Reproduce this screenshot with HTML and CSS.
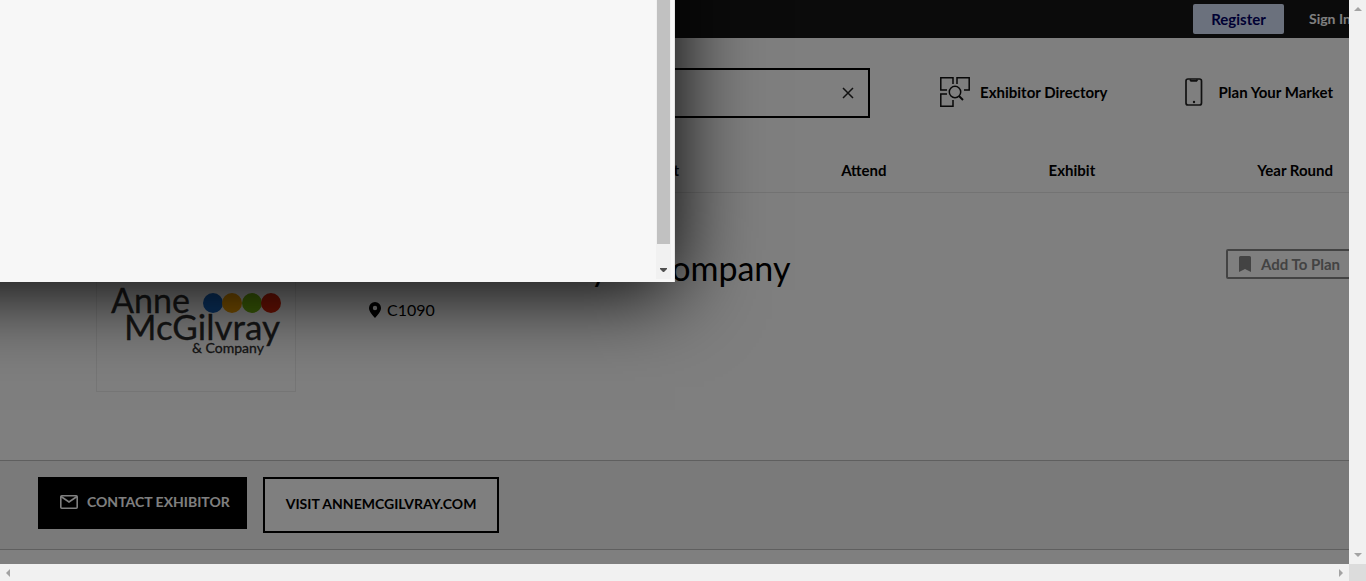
FILE: index.html
```html
<!DOCTYPE html>
<html lang="en">
<head>
<meta charset="utf-8">
<title>Anne McGilvray &amp; Company</title>
<link rel="stylesheet" href="styles.css">
</head>
<body>
<div class="window">
  <div class="page">
    <div class="topbar">
      <button class="register" type="button">Register</button>
      <a class="signin" href="#">Sign In</a>
    </div>
    <header class="header">
      <div class="tools">
        <form class="search">
          <input class="search-input" type="text" aria-label="Search">
          <button class="clear" type="reset" aria-label="Clear search">
            <svg width="12" height="12" viewBox="0 0 12 12"><path d="M1 1l10 10M11 1L1 11" fill="none" stroke="#222" stroke-width="1.5"/></svg>
          </button>
        </form>
        <a class="tool" href="#">
          <svg width="30" height="30" viewBox="0 0 30 30" fill="none" stroke="#111" stroke-width="1.5"><path d="M7 13H.8V.8H13V7M17 7V.8H29.200V13H24M7 17H.8V29.200H13V23"/><circle cx="15" cy="15" r="5.700"/><path d="M19 19l4 4" stroke-width="2"/></svg>
          <span>Exhibitor Directory</span>
        </a>
        <a class="tool plan" href="#">
          <svg width="18" height="28" viewBox="0 0 18 28" fill="none" stroke="#222" stroke-width="1.700"><rect x="1" y="1" width="15.500" height="26" rx="2"/><path d="M5 1.500l1 1.300h5.500l1-1.300"/><circle cx="9" cy="24" r="1.200" fill="#222" stroke="none"/></svg>
          <span>Plan Your Market</span>
        </a>
      </div>
      <nav class="nav">
        <a href="#">Market</a>
        <a href="#">Attend</a>
        <a href="#">Exhibit</a>
        <a href="#">Year Round</a>
      </nav>
    </header>
    <main>
      <section class="profile">
        <div class="logo">
          <svg width="198" height="197" viewBox="0 0 198 197" role="img" aria-label="Anne McGilvray &amp; Company">
            <g class="logo-text">
              <text x="14" y="119" font-size="34">Anne</text>
              <text x="27" y="146" font-size="35">McGilvray</text>
              <text x="95" y="159" font-size="14">&amp; Company</text>
            </g>
            <circle cx="116" cy="109" r="10" fill="#1565c0"/>
            <circle cx="135" cy="109" r="10" fill="#f5a000"/>
            <circle cx="155" cy="109" r="10" fill="#76b80c"/>
            <circle cx="174" cy="109" r="10" fill="#dc2408"/>
          </svg>
        </div>
        <div class="details">
          <h1 class="title">Anne McGilvray &amp; Company</h1>
          <p class="place">
            <svg width="12" height="16" viewBox="0 0 12 16"><path fill-rule="evenodd" d="M6 0a6 6 0 0 1 6 6c0 3.500-3 6.500-6 10C3 12.500 0 9.500 0 6a6 6 0 0 1 6-6zm0 3.800a2.200 2.200 0 1 0 0 4.400 2.200 2.200 0 0 0 0-4.400z"/></svg>
            <span>C1090</span>
          </p>
        </div>
        <button class="add" type="button">
          <svg width="12" height="16" viewBox="0 0 12 16"><path d="M1.500 0h9Q12 0 12 1.500V16l-6-3-6 3V1.500Q0 0 1.500 0z" fill="#868686"/></svg>
          <span>Add To Plan</span>
        </button>
      </section>
      <section class="actions">
        <button class="contact" type="button">
          <svg width="18" height="14" viewBox="0 0 18 14" fill="none" stroke="#fff" stroke-width="1.600"><rect x=".8" y=".8" width="16.400" height="12.400" rx="1"/><path d="M1 1.500l8 5.500 8-5.500"/></svg>
          <span>CONTACT EXHIBITOR</span>
        </button>
        <a class="visit" href="#">VISIT ANNEMCGILVRAY.COM</a>
      </section>
    </main>
    <div class="overlay"></div>
    <div class="modal" role="dialog" aria-label="Dialog">
      <div class="modal-track">
        <div class="modal-thumb"></div>
        <svg class="modal-arrow" width="7" height="4" viewBox="0 0 7 4"><path d="M0 0h7v1L4 4H3L0 1z" fill="#505050"/></svg>
      </div>
    </div>
  </div>
  <div class="vbar">
    <svg width="8" height="4" viewBox="0 0 8 4"><path d="M0 4L4 0l4 4z"/></svg>
    <svg width="8" height="4" viewBox="0 0 8 4"><path d="M0 0l4 4 4-4z"/></svg>
  </div>
  <div class="hbar">
    <svg width="4" height="8" viewBox="0 0 4 8"><path d="M4 0L0 4l4 4z"/></svg>
    <svg width="4" height="8" viewBox="0 0 4 8"><path d="M0 0l4 4-4 4z"/></svg>
  </div>
  <div class="corner"></div>
</div>
</body>
</html>
```
FILE: styles.css
```css
* { box-sizing: border-box; }
body {
  margin: 0;
  font-family: Lato, "Open Sans", sans-serif;
  font-size: 15px;
  line-height: 20px;
  color: #000;
}
a { color: inherit; text-decoration: none; }
button { font: inherit; color: inherit; padding: 0; margin: 0; white-space: nowrap; }
svg { display: block; flex: none; }

.window {
  display: grid;
  grid-template: minmax(0, 1fr) 17px / minmax(0, 1fr) 17px;
  height: 100vh;
}
.page { position: relative; overflow: hidden; background: #fff; }

.topbar {
  display: flex;
  justify-content: flex-end;
  align-items: center;
  gap: 25px;
  height: 38px;
  padding-bottom: 1px;
  background: #161616;
  color: #fff;
  font-size: 14px;
  font-weight: 700;
}
.register {
  width: 91px;
  height: 30px;
  border: 0;
  border-radius: 2px;
  background: #d6e2fa;
  color: #000066;
  font-size: 15px;
}
.signin { width: 40px; white-space: nowrap; }

.header { padding: 30px 16px 0 16px; border-bottom: 1px solid #e6e6e6; }
.tools { display: flex; align-items: center; }
.search {
  display: flex;
  flex: 1;
  align-items: center;
  height: 50px;
  margin-right: 70px;
  padding-right: 14px;
  border: 2px solid #000;
}
.search-input { flex: 1; min-width: 0; border: 0; background: none; font: inherit; outline: 0; }
.clear { border: 0; background: none; }
.tool { display: flex; align-items: center; gap: 10px; padding-bottom: 2px; font-weight: 700; white-space: nowrap; }
.plan { gap: 16px; margin-left: 77px; }
.nav {
  display: flex;
  justify-content: flex-end;
  gap: 162px;
  padding: 42px 0 12px;
  font-weight: 700;
  white-space: nowrap;
}

.profile {
  display: flex;
  align-items: flex-start;
  height: 267px;
  padding-left: 96px;
}
.logo { border: 1px solid #ececec; }
.logo-text { font-family: Lato, sans-serif; fill: #2c2c2c; stroke: #2c2c2c; stroke-width: .3px; }
.details { flex: 1; padding: 53px 0 0 73px; }
.title { margin: 0; font-size: 34px; line-height: 44px; font-weight: 400; white-space: nowrap; }
.place { display: flex; align-items: center; gap: 6px; margin: 10px 0 0; font-size: 16px; }
.add {
  display: flex;
  align-items: center;
  gap: 10px;
  width: 132px;
  height: 30px;
  margin: 56px -9px 0 0;
  padding: 0 0 1px 11px;
  border: 2px solid #868686;
  border-radius: 2px;
  background: none;
  color: #868686;
  font-weight: 700;
}

.actions {
  display: flex;
  align-items: flex-start;
  gap: 16px;
  padding: 16px 38px;
  border: solid #bebebe;
  border-width: 1px 0;
  background: #f5f5f5;
  font-size: 14px;
  font-weight: 700;
}
.contact {
  display: flex;
  align-items: center;
  gap: 9px;
  height: 52px;
  padding: 0 17px 2px 22px;
  border: 0;
  background: #000;
  color: #fff;
}
.visit { padding: 15px 21px 17px; border: 2px solid #000; background: #fff; }

.overlay { position: absolute; inset: 0; background: rgba(0, 0, 0, .5); }
.modal {
  position: absolute;
  left: -100px;
  top: -300px;
  width: 775px;
  height: 582px;
  padding: 0 3px 3px 0;
  border-right: 1px solid #e4e4e4;
  background: #f7f7f7;
  box-shadow: 0 8px 80px #000;
}
.modal-track {
  display: flex;
  flex-direction: column;
  align-items: center;
  height: 100%;
  width: 15px;
  margin-left: auto;
  background: #f1f1f1;
}
.modal-thumb { width: 13px; height: 544px; background: #c1c1c1; }
.modal-arrow { margin-top: 24px; }

.vbar, .hbar { display: flex; justify-content: space-between; align-items: center; background: #f1f1f1; fill: #a3a3a3; }
.vbar { flex-direction: column; padding: 7px 0; }
.hbar { padding: 0 6px; }
.corner { background: #dcdcdc; }
```
